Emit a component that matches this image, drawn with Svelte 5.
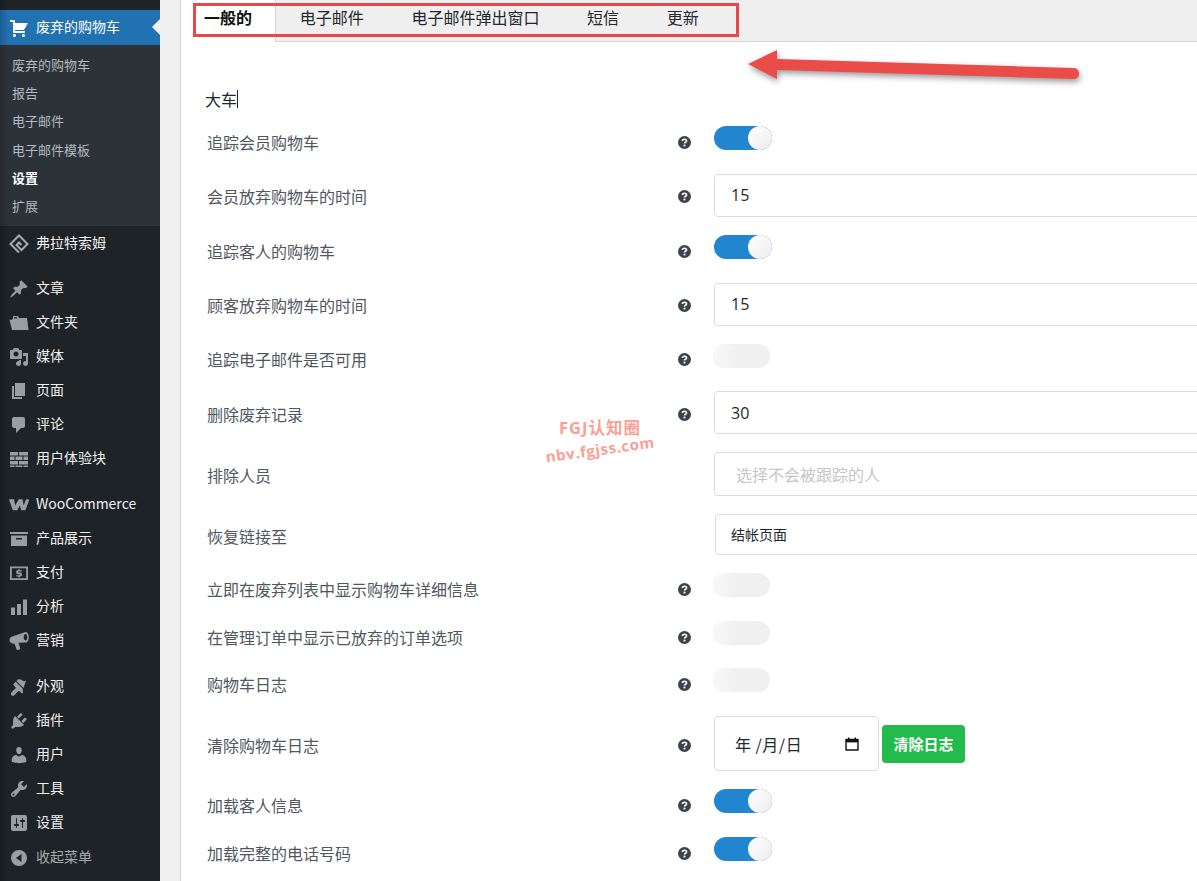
<script>
  const subItems = [
    { label: "废弃的购物车" },
    { label: "报告" },
    { label: "电子邮件" },
    { label: "电子邮件模板" },
    { label: "设置", current: true },
    { label: "扩展" },
  ];

  // icon paths are on a 20x20 box
  const groups = [
    [
      { label: "文章", icon: "M10.44 3.02l1.82-1.82 6.36 6.35-1.83 1.82c-1.05-.68-2.48-.57-3.41.36l-.75.75c-.92.93-1.04 2.35-.35 3.41l-1.83 1.82-2.41-2.41-2.8 2.79c-.42.42-3.38 2.71-3.8 2.29s1.86-3.39 2.28-3.81l2.79-2.79L4.1 9.36l1.83-1.82c1.05.69 2.48.57 3.4-.36l.75-.75c.93-.92 1.05-2.35.36-3.41z" },
      { label: "文件夹", icon: "M4 3h5l1 2h8l1.500 12H3L.5 6.800h2.300L4 5.500zM5 4.200v1.300h3.600L8 4.200z" },
      { label: "媒体", icon: "M13 11V4c0-.55-.45-1-1-1h-1.670L9 1H5L3.670 3H2c-.55 0-1 .45-1 1v7c0 .55.45 1 1 1h10c.55 0 1-.45 1-1zM7 4.500c1.380 0 2.500 1.120 2.500 2.500S8.380 9.500 7 9.500 4.500 8.380 4.500 7 5.620 4.500 7 4.500zM14 6h5v10.500c0 1.380-1.120 2.500-2.500 2.500S14 17.880 14 16.500s1.120-2.500 2.500-2.500c.17 0 .34.020.5.050V9h-3V6zm-4 8.050V13h2v3.500c0 1.380-1.120 2.500-2.500 2.500S7 17.880 7 16.500 8.120 14 9.500 14c.17 0 .34.020.5.050z" },
      { label: "页面", icon: "M6 15V2h10v13H6zm-1 1h8v2H3V5h2v11z" },
      { label: "评论", icon: "M5 2h9c1.100 0 2 .9 2 2v7c0 1.100-.9 2-2 2h-2l-5 5v-5H5c-1.100 0-2-.9-2-2V4c0-1.100.9-2 2-2z" },
      { label: "用户体验块", icon: "M1 3h8v3.500H1zM10 3h9v3.500h-9zM1 7.500h4.500V11H1zM6.500 7.500h7V11h-7zM14.500 7.500H19V11h-4.500zM1 12h8v3.500H1zM10 12h9v3.500h-9zM1 16.500h4.500V18H1zM6.500 16.500h7V18h-7zM14.500 16.500H19V18h-4.500z" },
    ],
    [
      { label: "WooCommerce", icon: "M0 4.200h5l1.200 6.300L9.800 4.200h3.700l1.200 6.300 2-5.600c.6-1 3.300-1 3.300.6l-3.600 9.800h-4.200l-1.400-4.800-2.500 4.800H3.800z" },
      { label: "产品展示", icon: "M1 3h18v2H1zM2 6.500h16V17H2zM7 9v1.500h6V9z" },
      { label: "支付", icon: "M1 3.500h18v13.500H1zM2.800 5.300v9.900h14.400V5.300zM10.800 6.300v1h1.900v1.300H9.200v1h2.400c.8 0 1.200.5 1.200 1.200v1.500c0 .7-.4 1.200-1.200 1.200h-.8v1H9.300v-1H7.400v-1.300h3.600v-1H8.500c-.8 0-1.200-.5-1.200-1.200V8.500c0-.7.4-1.200 1.200-1.200h.8v-1z" },
      { label: "分析", icon: "M2 10.500h4V18H2zM8 7h4v11H8zM14 2.500h4V18h-4z" },
      { label: "营销", icon: "M16.500 1c2 0 3.300 2.300 3.300 5.200s-1.300 5.300-3.300 5.300L9.500 11.800l1.700 5.400c.2.600-.1 1-.6 1.200l-1.800.6c-.5.1-1-.1-1.200-.6L5.500 12.700C3 12.700.5 11.600.5 9 .5 6.900 2 5.600 4 5.300zM16.500 3c-.9 0-1.800 1.400-1.800 3.200s.9 3.300 1.800 3.300 1.800-1.500 1.800-3.300S17.400 3 16.500 3z" },
    ],
    [
      { label: "外观", icon: "M14.480 11.060L7.410 3.990l1.500-1.500c.5-.56 2.300-.47 3.510.32 1.210.8 1.430 1.280 2.660 1.280 1.180 0 2.030-.7 2.030-.7zM13.770 11.770L6.700 4.700l-2.100 2.100c-.39.39-.39 1.030 0 1.420l1.800 1.800c.39.39.39 1.030 0 1.420l-3.900 3.900c-.78.78-.78 2.050 0 2.830s2.050.78 2.830 0l3.900-3.900c.39-.39 1.030-.39 1.420 0l1.800 1.800c.39.39 1.030.39 1.420 0z" },
      { label: "插件", icon: "M13.110 4.360L9.870 7.600 8 5.730l3.240-3.240c.35-.34 1.050-.2 1.560.32.52.51.66 1.210.31 1.550zm-8 1.770l.91-1.120 9.010 9.010-1.190.84c-.71.71-2.630 1.160-3.820 1.160H6.140L4.900 17.260c-.59.59-1.540.59-2.120 0-.59-.58-.59-1.530 0-2.120l1.240-1.240v-3.880c0-1.130.52-3.090 1.090-3.890zm7.260 3.970l3.240-3.240c.34-.35 1.040-.21 1.550.31.52.51.66 1.210.31 1.550l-3.240 3.250z" },
      { label: "用户", icon: "M10 9.250c-2.270 0-2.730-3.440-2.730-3.440C7 4.020 7.820 2 9.970 2c2.160 0 2.980 2.020 2.710 3.810 0 0-.41 3.440-2.680 3.440zm0 2.570L12.720 10c2.390 0 4.520 2.330 4.520 4.530v2.490s-3.650 1.130-7.240 1.130c-3.650 0-7.240-1.130-7.240-1.130v-2.490c0-2.250 1.940-4.480 4.470-4.480z" },
      { label: "工具", icon: "M16.680 9.770c-1.340 1.340-3.300 1.670-4.950.99l-5.410 6.520c-.99.99-2.590.99-3.580 0s-.99-2.590 0-3.570l6.520-5.420c-.68-1.650-.35-3.610.99-4.950 1.280-1.280 3.120-1.620 4.720-1.060l-2.890 2.890 2.820 2.820 2.860-2.870c.53 1.580.18 3.390-1.080 4.650zM3.810 16.210c.4.39 1.040.39 1.430 0 .4-.4.4-1.040 0-1.430-.39-.4-1.030-.4-1.430 0-.39.39-.39 1.030 0 1.430z" },
      { label: "设置", icon: "M18 16V4c0-1.100-.9-2-2-2H4c-1.100 0-2 .9-2 2v12c0 1.100.9 2 2 2h12c1.100 0 2-.9 2-2zM8 11h1c.55 0 1 .45 1 1s-.45 1-1 1H8v1.500c0 .28-.22.5-.5.5s-.5-.22-.5-.5V13H6c-.55 0-1-.45-1-1s.45-1 1-1h1V5.500c0-.28.22-.5.5-.5s.5.22.5.5V11zm5-2h-1c-.55 0-1-.45-1-1s.45-1 1-1h1V5.500c0-.28.22-.5.5-.5s.5.22.5.5V7h1c.55 0 1 .45 1 1s-.45 1-1 1h-1v5.500c0 .28-.22.5-.5.5s-.5-.22-.5-.5V9z" },
    ],
  ];

  const tabs = ["电子邮件", "电子邮件弹出窗口", "短信", "更新"];

  const rows = [
    { label: "追踪会员购物车", help: true, type: "toggle", on: true },
    { label: "会员放弃购物车的时间", help: true, type: "number", value: "15" },
    { label: "追踪客人的购物车", help: true, type: "toggle", on: true },
    { label: "顾客放弃购物车的时间", help: true, type: "number", value: "15" },
    { label: "追踪电子邮件是否可用", help: true, type: "toggle", on: false },
    { label: "删除废弃记录", help: true, type: "number", value: "30" },
    { label: "排除人员", type: "people" },
    { label: "恢复链接至", type: "select" },
    { label: "立即在废弃列表中显示购物车详细信息", help: true, type: "toggle", on: false },
    { label: "在管理订单中显示已放弃的订单选项", help: true, type: "toggle", on: false },
    { label: "购物车日志", help: true, type: "toggle", on: false },
    { label: "清除购物车日志", help: true, type: "date" },
    { label: "加载客人信息", help: true, type: "toggle", on: true },
    { label: "加载完整的电话号码", help: true, type: "toggle", on: true },
  ];
</script>

<div class="page">
  <aside class="sidebar">
    <div class="active-item">
      <svg class="icon cart" viewBox="0 0 20 20"><path d="M6 13h9c.55 0 1 .45 1 1s-.45 1-1 1H5c-.55 0-1-.45-1-1V4H2c-.55 0-1-.45-1-1s.45-1 1-1h3c.55 0 1 .45 1 1v2h13l-4 7H6v1zm-.5 3c.83 0 1.500.67 1.500 1.500S6.330 19 5.500 19 4 18.330 4 17.500 4.670 16 5.500 16zm9 0c.83 0 1.500.67 1.500 1.500s-.67 1.500-1.500 1.500-1.500-.67-1.500-1.500.67-1.500 1.500-1.500z" /></svg>
      <span>废弃的购物车</span>
      <i class="notch"></i>
    </div>
    <ul class="submenu">
      {#each subItems as item}
        <li class:current={item.current}>{item.label}</li>
      {/each}
    </ul>
    <div class="item flatsome">
      <svg class="icon" viewBox="0 0 20 20">
        <path class="diamond" d="M10 18.500L1.500 10 10 1.500 18.500 10 12.500 16 7.500 11 10 8.500 12.500 11" />
      </svg>
      <span>弗拉特索姆</span>
    </div>
    {#each groups as group}
      <div class="group">
        {#each group as item}
          <div class="item">
            <svg class="icon" viewBox="0 0 20 20"><path fill-rule="evenodd" d={item.icon} /></svg>
            <span>{item.label}</span>
          </div>
        {/each}
      </div>
    {/each}
    <div class="item collapse">
      <svg class="icon" viewBox="0 0 20 20">
        <path fill-rule="evenodd" d="M10 2a8 8 0 1 1 0 16 8 8 0 0 1 0-16zM12.500 6L7 10l5.500 4z" />
      </svg>
      <span>收起菜单</span>
    </div>
  </aside>

  <main class="content">
    <nav class="tabs">
      <div class="tab active">一般的</div>
      {#each tabs as tab}
        <div class="tab">{tab}</div>
      {/each}
      <div class="tab-rest"></div>
    </nav>

    <section class="form">
      <h3>大车<i class="caret"></i></h3>
      {#each rows as row}
        <div class="row">
          <div class="label">{row.label}</div>
          <div class="help">
            {#if row.help}
              <svg viewBox="0 0 14 14" width="13" height="13">
                <circle cx="7" cy="7" r="7" fill="#3c434a" />
                <path d="M4.800 5.400c0-1.300 1.100-1.900 2.200-1.900s2.200.6 2.200 1.800c0 1.500-2.200 1.400-2.200 2.900" fill="none" stroke="#fff" stroke-width="1.800" />
                <rect x="6" y="9.300" width="2" height="1.900" fill="#fff" />
              </svg>
            {/if}
          </div>
          <div class="control">
            {#if row.type === "toggle"}
              <div class="toggle" class:on={row.on}><i></i></div>
            {:else if row.type === "number"}
              <div class="box number">{row.value}</div>
            {:else if row.type === "people"}
              <div class="box people">选择不会被跟踪的人</div>
            {:else if row.type === "select"}
              <div class="box select"><span>结帐页面</span></div>
            {:else}
              <div class="date-row">
                <div class="box date">
                  <span>年 /月/日</span>
                  <svg viewBox="0 0 14 14" width="14" height="14">
                    <path d="M1 2.500h12V13H1z" fill="none" stroke="#111" stroke-width="1.400" stroke-linejoin="round" />
                    <rect x="1" y="2" width="12" height="3.400" fill="#111" />
                    <rect x="3" y="0.500" width="1.500" height="2" fill="#111" />
                    <rect x="9.500" y="0.500" width="1.500" height="2" fill="#111" />
                  </svg>
                </div>
                <button class="clear">清除日志</button>
              </div>
            {/if}
          </div>
        </div>
      {/each}
    </section>
  </main>

  <!-- marks drawn on top of the screenshot -->
  <div class="red-box"></div>
  <svg class="arrow" width="360" height="50" viewBox="0 0 360 50">
    <path d="M30 7L1 21L30 36V27L326 36Q332 36 332 30.500Q332 25 326 25L30 16Z" fill="#ea4c48" />
  </svg>
  <div class="mark">
    <div class="mark-title">FGJ认知圈</div>
    <div class="mark-url">nbv.fgjss.com</div>
  </div>
</div>

<style>
  :global(body) {
    margin: 0;
    overflow: hidden;
    background: #fff;
  }
  .page {
    position: relative;
    display: flex;
    height: 881px;
    overflow: hidden;
    font-family: "Noto Sans CJK SC", "Liberation Sans", sans-serif;
    color: #50575e;
  }

  /* sidebar */
  .sidebar {
    position: relative;
    flex: 0 0 160px;
    width: 160px;
    padding-top: 10px;
    box-sizing: border-box;
    background: #1d2327;
    color: #f0f0f1;
    font-size: 14px;
  }
  .sidebar::after {
    content: "";
    position: absolute;
    inset: 0 auto 0 0;
    width: 8px;
    background: linear-gradient(to right, rgba(0, 0, 0, 0.18), transparent);
  }
  .icon {
    flex: none;
    width: 20px;
    height: 20px;
    margin: 0 7px 0 9px;
    fill: #9a9ea3;
  }
  .active-item {
    position: relative;
    display: flex;
    align-items: center;
    height: 35px;
    background: #2271b1;
    color: #fff;
  }
  .active-item span,
  .item span {
    padding-bottom: 4px;
  }
  .icon.cart {
    fill: #fff;
  }
  .notch {
    position: absolute;
    right: 0;
    top: 9px;
    border: 8px solid transparent;
    border-right-color: #f0f0f1;
    border-left-width: 0;
  }
  .submenu {
    list-style: none;
    margin: 0;
    padding: 6px 0 6px 12px;
    background: #2c3338;
    color: #b4b9be;
    font-size: 13px;
  }
  .submenu li {
    height: 28.2px;
    line-height: 27px;
  }
  .submenu li.current {
    color: #fff;
    font-weight: 700;
  }
  .item {
    display: flex;
    align-items: center;
    height: 34.2px;
  }
  .flatsome {
    margin: 1px 0 10.100px;
  }
  .diamond {
    fill: none;
    stroke: #a7aaad;
    stroke-width: 2;
  }
  .group {
    margin-bottom: 11px;
  }
  .collapse {
    margin-top: -11px;
    color: #a7aaad;
  }

  /* main column */
  .content {
    flex: 1;
    min-width: 0;
    padding-left: 20px;
    background: #f0f0f1;
  }
  .tabs {
    display: flex;
    height: 42px;
    background: #fff;
    font-size: 16px;
    color: #23282d;
    border-left: 1px solid #d5d5d5;
  }
  .tab {
    padding: 0 23.800px;
    line-height: 35px;
    background: #efefef;
    border-bottom: 1px solid #d5d5d5;
    white-space: nowrap;
  }
  .tab.active {
    padding: 0 23px;
    background: #fff;
    border-bottom: 0;
    border-right: 1px solid #d5d5d5;
    color: #111;
    font-weight: 700;
  }
  .tab-rest {
    flex: 1;
    background: #efefef;
    border-bottom: 1px solid #d5d5d5;
  }
  .form {
    height: 839px;
    padding-left: 26px;
    background: #fff;
    border-left: 1px solid #d5d5d5;
  }
  h3 {
    display: flex;
    align-items: center;
    box-sizing: border-box;
    height: 84px;
    margin: 0 0 0 -2px;
    padding: 30px 0 0;
    font-size: 16px;
    font-weight: 400;
    color: #23282d;
  }
  .caret {
    width: 1px;
    height: 18px;
    background: #23282d;
  }
  .row {
    display: grid;
    grid-template-columns: 471px 36px 600px;
    align-items: center;
    padding-bottom: 18px;
    font-size: 16px;
  }
  .label {
    padding-top: 2px;
    line-height: 22px;
  }
  .help {
    display: flex;
    padding-top: 3px;
  }
  .toggle {
    position: relative;
    width: 57px;
    height: 24px;
    margin: 0 0 5.800px -1px;
    border-radius: 12px;
    background: #f0f0f0;
  }
  .toggle i {
    position: absolute;
    left: 0;
    top: 0;
    width: 24px;
    height: 24px;
    border-radius: 50%;
    background: linear-gradient(100deg, #f8f8f8, #f1f1f1);
  }
  .toggle.on {
    width: 58px;
    margin-left: 0;
    background: #2185d0;
  }
  .toggle.on i {
    left: 34px;
    background: linear-gradient(135deg, #fff, #ececec);
  }
  .box {
    box-sizing: border-box;
    display: flex;
    align-items: center;
    border: 1px solid #dcdcde;
    border-radius: 4px;
    background: #fff;
    color: #23282d;
  }
  .number {
    height: 43px;
    padding-left: 16px;
    font-family: "Open Sans", "Noto Sans CJK SC", sans-serif;
    font-size: 16px;
  }
  .people {
    height: 44px;
    padding-left: 21px;
    color: #c6c6c6;
  }
  .select {
    height: 40.500px;
    margin-left: 1px;
    padding-left: 15px;
    font-size: 14px;
  }
  .select span {
    padding-bottom: 2px;
  }
  .date-row {
    display: flex;
    align-items: center;
    gap: 3px;
  }
  .date {
    justify-content: space-between;
    width: 165px;
    height: 55px;
    padding: 0 19px 0 20px;
    font-size: 16px;
    letter-spacing: 0.5px;
  }
  .clear {
    width: 83px;
    height: 38px;
    padding: 0;
    border: 0;
    border-radius: 4px;
    background: #22bb4c;
    color: #fff;
    font: 700 15px "Noto Sans CJK SC", sans-serif;
  }

  /* screenshot annotations */
  .red-box {
    position: absolute;
    left: 193px;
    top: 3px;
    width: 540px;
    height: 28px;
    border: 3px solid #e8484a;
  }
  .arrow {
    position: absolute;
    left: 747px;
    top: 43px;
    filter: drop-shadow(1px 3px 3px rgba(0, 0, 0, 0.4));
  }
  .mark {
    position: absolute;
    left: 540px;
    top: 417px;
    width: 120px;
    text-align: center;
    color: #fb9f94;
    font-weight: 700;
    font-family: "Open Sans", "Noto Sans CJK SC", sans-serif;
  }
  .mark-title {
    font-size: 16.500px;
    line-height: 22px;
    letter-spacing: 1px;
  }
  .mark-url {
    font-size: 15px;
    line-height: 20px;
    letter-spacing: 0.6px;
    white-space: nowrap;
    transform: rotate(-8deg);
  }
</style>
